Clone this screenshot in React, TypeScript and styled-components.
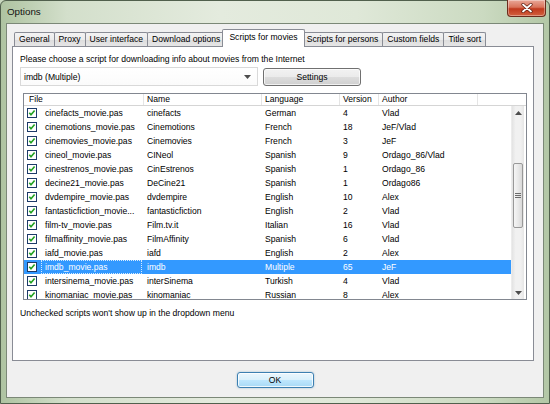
import React from "react";
import styled, { createGlobalStyle, css } from "styled-components";

const GlobalStyle = createGlobalStyle`
  html, body {
    margin: 0;
    padding: 0;
    width: 550px;
    height: 404px;
    overflow: hidden;
    background: #c9d8bf;
  }
  * {
    box-sizing: border-box;
  }
`;

const Window = styled.div`
  width: 550px;
  height: 404px;
  display: flex;
  flex-direction: column;
  border: 1px solid #51604d;
  border-radius: 6px 6px 0 0;
  background: linear-gradient(
    90deg,
    #aec3a1 0%,
    #d3dfcb 12%,
    #e4ebde 40%,
    #dfe8d8 65%,
    #cbdac1 88%,
    #b3c7a6 100%
  );
  font-family: "Liberation Sans", Arial, sans-serif;
  font-size: 8.6px;
  color: #000;
`;

const TitleBar = styled.div`
  height: 22px;
  display: flex;
  align-items: flex-start;
  justify-content: space-between;
  padding-left: 6px;
`;

const Title = styled.span`
  font-size: 9.8px;
  line-height: 22px;
  color: #111;
`;

const CloseButton = styled.div`
  width: 39px;
  height: 17px;
  margin-right: 3px;
  margin-top: -1px;
  display: flex;
  align-items: center;
  justify-content: center;
  border: 1px solid #6b2b1c;
  border-top: none;
  border-radius: 0 0 4px 4px;
  background: linear-gradient(180deg, #e9a898 0%, #d9735a 45%, #c0391d 55%, #d2613f 100%);
  box-shadow: inset 0 0 0 1px rgba(255, 255, 255, 0.35);
`;

const Client = styled.div`
  flex: 1;
  margin: 0 5px 5px 5px;
  border: 1px solid #7b8877;
  background: #f0f0f0;
  display: flex;
  flex-direction: column;
`;

const TabControl = styled.div`
  width: 522px;
  margin: 5px 0 0 5px;
  flex: 1;
  display: flex;
  flex-direction: column;
`;

const TabStrip = styled.div`
  height: 17px;
  display: flex;
  align-items: flex-end;
  padding-left: 2px;
`;

const Tab = styled.div<{ $active?: boolean }>`
  position: relative;
  height: 14px;
  padding: 0 4px;
  margin-right: -1px;
  border: 1px solid #898c95;
  border-bottom: none;
  border-radius: 2px 2px 0 0;
  background: linear-gradient(180deg, #f3f3f3 0%, #ebebeb 50%, #dcdcdc 51%, #e6e6e6 100%);
  line-height: 13px;
  white-space: nowrap;
  ${(p) =>
    p.$active &&
    css`
      z-index: 1;
      height: 18px;
      margin: 0 -3px -1px -2px;
      padding: 0 6px;
      background: #fff;
      line-height: 15px;
    `}
`;

const Panel = styled.div`
  flex: 1;
  border: 1px solid #898c95;
  background: #fff;
  padding: 7px 0 0 7px;
  display: flex;
  flex-direction: column;
`;

const Label = styled.div`
  line-height: 11px;
  height: 11px;
  white-space: nowrap;
`;

const ControlRow = styled.div`
  margin-top: 2px;
  height: 19px;
  display: flex;
  align-items: center;
  gap: 5px;
`;

const Combo = styled.div`
  width: 238px;
  height: 19px;
  display: flex;
  align-items: center;
  justify-content: space-between;
  padding: 0 6px 0 3px;
  border: 1px solid #d9d9d9;
  background: linear-gradient(180deg, #ffffff 0%, #fbfbfb 100%);
`;

const Button = styled.div<{ $primary?: boolean }>`
  width: 98px;
  height: 18px;
  display: flex;
  align-items: center;
  justify-content: center;
  border: 1px solid #707070;
  border-radius: 3px;
  background: linear-gradient(180deg, #f2f2f2 0%, #ebebeb 50%, #dddddd 51%, #cfcfcf 100%);
  box-shadow: inset 0 0 0 1px rgba(255, 255, 255, 0.7);
  ${(p) =>
    p.$primary &&
    css`
      width: 77px;
      height: 16px;
      border-color: #3c7fb1;
      background: linear-gradient(180deg, #eaf6fd 0%, #d9f0fc 50%, #bee6fd 51%, #a7d9f5 100%);
      box-shadow: inset 0 0 0 1px rgba(255, 255, 255, 0.8), 0 0 2px rgba(60, 127, 177, 0.5);
    `}
`;

const List = styled.div`
  margin: 7px 0 0 3px;
  width: 504px;
  height: 207px;
  border: 1px solid #828790;
  display: flex;
  flex-direction: column;
`;

const COLUMNS = "120px 118px 78px 39px 99px 1fr";

const Header = styled.div`
  height: 12px;
  display: grid;
  grid-template-columns: ${COLUMNS};
  border-bottom: 1px solid #d5d5d5;
  background: #fff;
`;

const HeaderCell = styled.div`
  padding-left: 3px;
  line-height: 11px;
  border-right: 1px solid #e5e5e5;
  white-space: nowrap;
  &:first-child {
    padding-left: 5px;
  }
  &:last-child {
    border-right: none;
  }
`;

const Body = styled.div`
  flex: 1;
  display: flex;
  overflow: hidden;
`;

const Rows = styled.div`
  flex: 1;
  overflow: hidden;
`;

const Row = styled.div<{ $selected?: boolean }>`
  height: 14px;
  display: grid;
  grid-template-columns: ${COLUMNS};
  line-height: 14px;
  white-space: nowrap;
  ${(p) =>
    p.$selected &&
    css`
      background: #3399ff;
      color: #fff;
    `}
`;

const Cell = styled.div`
  padding-left: 3px;
  overflow: hidden;
`;

const FileCell = styled.div`
  display: flex;
  align-items: center;
  padding-left: 3px;
`;

const FileName = styled.span<{ $focused?: boolean }>`
  flex: 1;
  height: 14px;
  line-height: 12px;
  margin-left: 4px;
  margin-right: 2px;
  padding-left: 3px;
  border: 1px solid transparent;
  ${(p) =>
    p.$focused &&
    css`
      border: 1px dotted #d6ebff;
    `}
`;

const ScrollBar = styled.div`
  width: 13px;
  margin-right: 2px;
  display: flex;
  flex-direction: column;
  background: linear-gradient(90deg, #e3e3e3 0%, #f1f1f1 30%, #f1f1f1 70%, #e6e6e6 100%);
  border-left: 1px solid #ececec;
`;

const ArrowButton = styled.div`
  height: 13px;
  display: flex;
  align-items: center;
  justify-content: center;
`;

const Track = styled.div`
  flex: 1;
`;

const Thumb = styled.div`
  height: 65px;
  margin: 0 1px;
  display: flex;
  align-items: center;
  justify-content: center;
  border: 1px solid #989898;
  border-radius: 2px;
  background: linear-gradient(90deg, #f5f5f5 0%, #e9e9e9 50%, #d9d9d9 100%);
`;

const Hint = styled.div`
  margin-top: 8px;
  line-height: 11px;
`;

const Footer = styled.div`
  height: 36px;
  display: flex;
  justify-content: center;
  padding-top: 11px;
`;

interface Script {
  file: string;
  name: string;
  language: string;
  version: string;
  author: string;
}

const scripts: Script[] = [
  { file: "cinefacts_movie.pas", name: "cinefacts", language: "German", version: "4", author: "Vlad" },
  { file: "cinemotions_movie.pas", name: "Cinemotions", language: "French", version: "18", author: "JeF/Vlad" },
  { file: "cinemovies_movie.pas", name: "Cinemovies", language: "French", version: "3", author: "JeF" },
  { file: "cineol_movie.pas", name: "CINeol", language: "Spanish", version: "9", author: "Ordago_86/Vlad" },
  { file: "cinestrenos_movie.pas", name: "CinEstrenos", language: "Spanish", version: "1", author: "Ordago_86" },
  { file: "decine21_movie.pas", name: "DeCine21", language: "Spanish", version: "1", author: "Ordago86" },
  { file: "dvdempire_movie.pas", name: "dvdempire", language: "English", version: "10", author: "Alex" },
  { file: "fantasticfiction_movie...", name: "fantasticfiction", language: "English", version: "2", author: "Vlad" },
  { file: "film-tv_movie.pas", name: "Film.tv.it", language: "Italian", version: "16", author: "Vlad" },
  { file: "filmaffinity_movie.pas", name: "FilmAffinity", language: "Spanish", version: "6", author: "Vlad" },
  { file: "iafd_movie.pas", name: "iafd", language: "English", version: "2", author: "Alex" },
  { file: "imdb_movie.pas", name: "imdb", language: "Multiple", version: "65", author: "JeF" },
  { file: "intersinema_movie.pas", name: "interSinema", language: "Turkish", version: "4", author: "Vlad" },
  { file: "kinomaniac_movie.pas", name: "kinomaniac", language: "Russian", version: "8", author: "Alex" },
];

const tabs = [
  "General",
  "Proxy",
  "User interface",
  "Download options",
  "Scripts for movies",
  "Scripts for persons",
  "Custom fields",
  "Title sort",
];

const CheckBox: React.FC = () => (
  <svg width="10" height="10" viewBox="0 0 10 10">
    <rect x="0.5" y="0.5" width="9" height="9" fill="#fff" stroke="#1d3b69" />
    <path d="M2.3 4.8 L4 6.8 L7.6 2.6" fill="none" stroke="#21a121" strokeWidth="1.6" />
  </svg>
);

const CloseGlyph: React.FC = () => (
  <svg width="12" height="10" viewBox="0 0 12 10">
    <path d="M2 1.5 L10 8.5 M10 1.5 L2 8.5" stroke="#5a1a0c" strokeWidth="3.2" strokeLinecap="round" />
    <path d="M2 1.5 L10 8.5 M10 1.5 L2 8.5" stroke="#fff" strokeWidth="1.8" strokeLinecap="round" />
  </svg>
);

const Arrow: React.FC<{ up?: boolean }> = ({ up }) => (
  <svg width="7" height="4" viewBox="0 0 7 4">
    <path d={up ? "M0 4 L3.5 0 L7 4 Z" : "M0 0 L3.5 4 L7 0 Z"} fill="#4d4d4d" />
  </svg>
);

const Grip: React.FC = () => (
  <svg width="6" height="6" viewBox="0 0 6 6">
    <path d="M0 0.5 H6 M0 2.5 H6 M0 4.5 H6" stroke="#6b6b6b" strokeWidth="1" />
  </svg>
);

const App: React.FC = () => {
  const selected = "imdb_movie.pas";
  return (
    <>
      <GlobalStyle />
      <Window>
        <TitleBar>
          <Title>Options</Title>
          <CloseButton>
            <CloseGlyph />
          </CloseButton>
        </TitleBar>
        <Client>
          <TabControl>
            <TabStrip>
              {tabs.map((t) => (
                <Tab key={t} $active={t === "Scripts for movies"}>
                  {t}
                </Tab>
              ))}
            </TabStrip>
            <Panel>
              <Label>Please choose a script for downloading info about movies from the Internet</Label>
              <ControlRow>
                <Combo>
                  <span>imdb (Multiple)</span>
                  <Arrow />
                </Combo>
                <Button>Settings</Button>
              </ControlRow>
              <List>
                <Header>
                  <HeaderCell>File</HeaderCell>
                  <HeaderCell>Name</HeaderCell>
                  <HeaderCell>Language</HeaderCell>
                  <HeaderCell>Version</HeaderCell>
                  <HeaderCell>Author</HeaderCell>
                  <HeaderCell />
                </Header>
                <Body>
                  <Rows>
                    {scripts.map((s) => (
                      <Row key={s.file} $selected={s.file === selected}>
                        <FileCell>
                          <CheckBox />
                          <FileName $focused={s.file === selected}>{s.file}</FileName>
                        </FileCell>
                        <Cell>{s.name}</Cell>
                        <Cell>{s.language}</Cell>
                        <Cell>{s.version}</Cell>
                        <Cell>{s.author}</Cell>
                        <Cell />
                      </Row>
                    ))}
                  </Rows>
                  <ScrollBar>
                    <ArrowButton>
                      <Arrow up />
                    </ArrowButton>
                    <Track>
                      <Thumb style={{ marginTop: 44 }}>
                        <Grip />
                      </Thumb>
                    </Track>
                    <ArrowButton>
                      <Arrow />
                    </ArrowButton>
                  </ScrollBar>
                </Body>
              </List>
              <Hint>Unchecked scripts won't show up in the dropdown menu</Hint>
            </Panel>
          </TabControl>
          <Footer>
            <Button $primary>OK</Button>
          </Footer>
        </Client>
      </Window>
    </>
  );
};

export default App;
